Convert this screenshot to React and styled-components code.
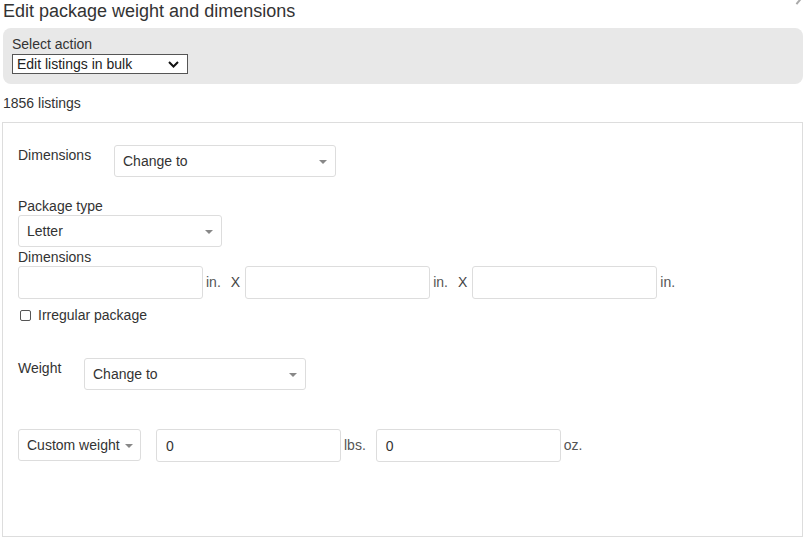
import React from "react";
import styled, { createGlobalStyle } from "styled-components";

const Global = createGlobalStyle`
  body {
    margin: 0;
    background: #fff;
    font-family: "Liberation Sans", Arial, sans-serif;
    color: #333;
  }
`;

const Page = styled.div`
  position: relative;
  width: 801px;
  padding-left: 2px;
  height: 544px;
  overflow: hidden;
`;

const Title = styled.h1`
  margin: 0 0 0 1px;
  font-size: 18px;
  font-weight: normal;
  line-height: 22px;
  color: #333;
`;

const CloseMark = styled.span`
  position: absolute;
  top: -3px;
  right: 3px;
  width: 2px;
  height: 8px;
  background: #aaa;
  transform: rotate(40deg);
`;

const ActionBar = styled.div`
  margin: 6px 0 0 1px;
  height: 56px;
  box-sizing: border-box;
  background: #e8e8e8;
  border-radius: 8px;
  padding: 8px 9px;
`;

const ActionLabel = styled.div`
  font-size: 14px;
  line-height: 16px;
  color: #333;
`;

const NativeSelect = styled.div`
  margin-top: 2px;
  width: 176px;
  height: 20px;
  box-sizing: border-box;
  border: 1px solid #555;
  background: #fff;
  display: flex;
  align-items: center;
  justify-content: space-between;
  padding: 0 8px 0 4px;
  font-size: 14px;
  color: #222;
`;

const Count = styled.div`
  margin: 11px 0 0 1px;
  font-size: 14px;
  line-height: 16px;
  color: #333;
`;

const Panel = styled.div`
  margin-top: 11px;
  height: 415px;
  box-sizing: border-box;
  border: 1px solid #ddd;
  padding: 22px 15px 0 15px;
`;

const InlineRow = styled.div`
  display: flex;
  align-items: flex-start;
  margin-top: ${({ $mt }) => $mt || 0}px;
`;

const SideLabel = styled.div`
  width: ${({ $w }) => $w}px;
  flex: none;
  font-size: 14px;
  line-height: 16px;
  padding-top: 2px;
`;

const TopLabel = styled.div`
  font-size: 14px;
  line-height: 16px;
  margin-top: ${({ $mt }) => $mt || 0}px;
`;

const Dropdown = styled.div`
  width: ${({ $w }) => $w}px;
  height: 32px;
  box-sizing: border-box;
  border: 1px solid #ddd;
  border-radius: 3px;
  background: #fff;
  display: flex;
  align-items: center;
  justify-content: space-between;
  padding: 0 ${({ $pr }) => $pr ?? 8}px 0 8px;
  margin-top: ${({ $mt }) => $mt || 0}px;
  font-size: 14px;
  color: #333;
  flex: none;
`;

const Caret = styled.span`
  width: 0;
  height: 0;
  border-left: 4px solid transparent;
  border-right: 4px solid transparent;
  border-top: 4px solid #888;
  margin-top: 1px;
`;

const Field = styled.div`
  width: ${({ $w }) => $w}px;
  height: 33px;
  box-sizing: border-box;
  border: 1px solid #ddd;
  border-radius: 3px;
  background: #fff;
  display: flex;
  align-items: center;
  padding-left: 9px;
  margin-left: ${({ $ml }) => $ml || 0}px;
  font-size: 14px;
  color: #333;
  flex: none;
`;

const Unit = styled.span`
  font-size: 14px;
  color: #555;
  margin: 0 ${({ $mr }) => $mr ?? 0}px 0 3px;
  line-height: 33px;
`;

const Times = styled.span`
  font-size: 14px;
  color: #444;
  margin: 0 5px 0 10px;
  line-height: 33px;
`;

const CheckRow = styled.label`
  display: flex;
  align-items: center;
  gap: 7px;
  margin: 8px 0 0 2px;
  font-size: 14px;
  line-height: 16px;
  color: #333;
`;

const Box = styled.span`
  width: 11px;
  height: 11px;
  border: 1px solid #555;
  border-radius: 2px;
  box-sizing: border-box;
`;

const Chevron = () => (
  <svg width="11" height="7" viewBox="0 0 11 7">
    <path d="M1 1l4.5 4.5L10 1" fill="none" stroke="#111" strokeWidth="2" />
  </svg>
);

export default function App() {
  return (
    <Page>
      <Global />
      <CloseMark />
      <Title>Edit package weight and dimensions</Title>
      <ActionBar>
        <ActionLabel>Select action</ActionLabel>
        <NativeSelect>
          <span>Edit listings in bulk</span>
          <Chevron />
        </NativeSelect>
      </ActionBar>
      <Count>1856 listings</Count>
      <Panel>
        <InlineRow>
          <SideLabel $w={96}>Dimensions</SideLabel>
          <Dropdown $w={222}>
            <span>Change to</span>
            <Caret />
          </Dropdown>
        </InlineRow>
        <TopLabel $mt={21}>Package type</TopLabel>
        <Dropdown $w={204} $mt={1}>
          <span>Letter</span>
          <Caret />
        </Dropdown>
        <TopLabel $mt={2}>Dimensions</TopLabel>
        <InlineRow $mt={1}>
          <Field $w={185} />
          <Unit>in.</Unit>
          <Times>X</Times>
          <Field $w={185} />
          <Unit>in.</Unit>
          <Times>X</Times>
          <Field $w={185} />
          <Unit>in.</Unit>
        </InlineRow>
        <CheckRow>
          <Box />
          Irregular package
        </CheckRow>
        <InlineRow $mt={35}>
          <SideLabel $w={66}>Weight</SideLabel>
          <Dropdown $w={222}>
            <span>Change to</span>
            <Caret />
          </Dropdown>
        </InlineRow>
        <InlineRow $mt={39}>
          <Dropdown $w={123} $pr={7}>
            <span>Custom weight</span>
            <Caret />
          </Dropdown>
          <Field $w={185} $ml={15}>0</Field>
          <Unit $mr={10}>lbs.</Unit>
          <Field $w={185}>0</Field>
          <Unit>oz.</Unit>
        </InlineRow>
      </Panel>
    </Page>
  );
}
